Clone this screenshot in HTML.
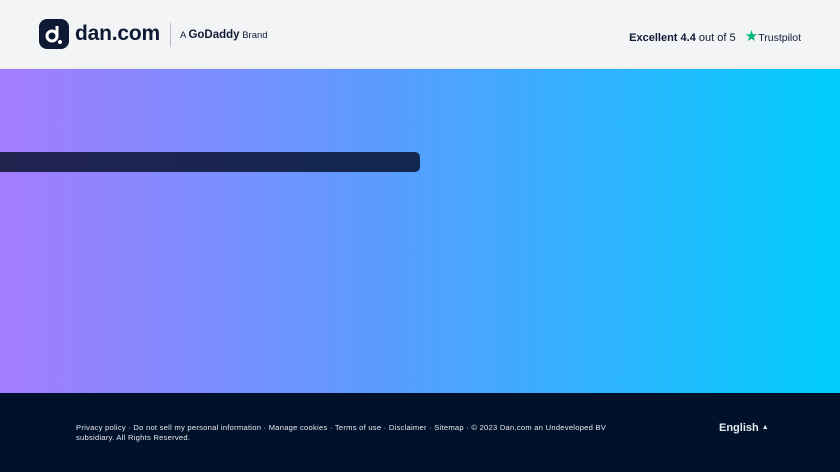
<!DOCTYPE html>
<html><head><meta charset="utf-8"><style>
*{margin:0;padding:0;box-sizing:border-box}
body{width:840px;height:472px;overflow:hidden;font-family:"Liberation Sans",sans-serif}
.h{height:69px;background:#f3f4f6;position:relative;border-bottom:1px solid #e6e8eb}
.logo{position:absolute;left:39px;top:19px;width:30px;height:30px;background:#0e1a33;border-radius:8px}
.dan{position:absolute;left:75px;top:22px;font-size:21px;font-weight:bold;color:#0e1a33;letter-spacing:-0.2px}
.sep{position:absolute;left:170px;top:23px;width:1px;height:24px;background:#b8bcc4}
.gd{position:absolute;left:180px;top:29px;font-size:9.5px;color:#0e1a33}
.gd b{font-size:11.5px}
.tp{position:absolute;right:39px;top:27px;font-size:11px;color:#0e1a33}
.m{position:absolute;top:69px;left:0;width:840px;height:324px;background:linear-gradient(90deg,#a47cff,#5c9cff 45%,#00cdfd)}
.bar{position:absolute;left:0;top:83px;width:420px;height:20px;background:linear-gradient(90deg,#222450,#12284f);border-radius:0 5px 5px 0}
.f{position:absolute;top:393px;left:0;width:840px;height:79px;background:#00112b;color:#e8ebf0}
.ft{position:absolute;left:76px;top:30px;width:540px;font-size:7.6px;line-height:10px;letter-spacing:0.25px}
.en{position:absolute;left:719px;top:29px;font-size:11px;font-weight:bold}
</style></head><body>
<div class="h">
<div class="logo"><svg width="30" height="30" viewBox="0 0 30 30"><circle cx="13" cy="17" r="5" fill="none" stroke="#fff" stroke-width="3"/><path d="M18 17V7" stroke="#fff" stroke-width="3"/><circle cx="21" cy="23" r="2" fill="#fff"/></svg></div>
<div class="dan">dan.com</div><div class="sep"></div>
<div class="gd">A <b>GoDaddy</b> Brand</div>
<div class="tp"><b>Excellent 4.4</b> out of 5 &nbsp; <span style="color:#00b67a;font-size:15px">★</span><span style="font-size:10.5px">Trustpilot</span></div>
</div>
<div class="m"><div class="bar"></div></div>
<div class="f"><div class="ft">Privacy policy · Do not sell my personal information · Manage cookies · Terms of use · Disclaimer · Sitemap · © 2023 Dan.com an Undeveloped BV subsidiary. All Rights Reserved.</div><div class="en">English <span style="font-size:7px;vertical-align:2px">▲</span></div></div>
</body></html>
